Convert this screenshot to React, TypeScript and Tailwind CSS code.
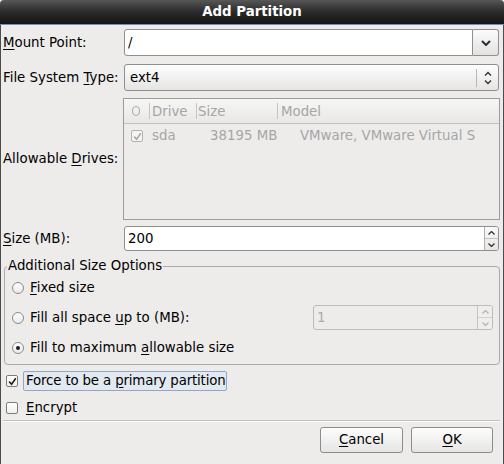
import React from "react";

function Mn({ children }: { children: React.ReactNode }) {
  return <u className="underline decoration-1 underline-offset-[2px]">{children}</u>;
}

function ChevronDown() {
  return (
    <svg width="10" height="6" viewBox="0 0 10 6">
      <path d="M1 1L5 5L9 1" fill="none" stroke="#2e2e2e" strokeWidth="2" />
    </svg>
  );
}

function UpDown() {
  return (
    <svg width="8" height="16" viewBox="0 0 8 16">
      <path d="M1 5.5L4 2.5L7 5.5M1 10.5L4 13.5L7 10.5" fill="none" stroke="#333" strokeWidth="1.4" />
    </svg>
  );
}

function Arrow({ up, color }: { up?: boolean; color: string }) {
  return (
    <svg width="7" height="4" viewBox="0 0 7 4">
      <path d={up ? "M0.5 3.5L3.5 0.5L6.5 3.5" : "M0.5 0.5L3.5 3.5L6.5 0.5"} fill="none" stroke={color} strokeWidth="1.3" />
    </svg>
  );
}

function SpinButtons({ disabled }: { disabled?: boolean }) {
  const c = disabled ? "#b4b4b4" : "#333";
  return (
    <div
      className={
        disabled
          ? "w-[15px] flex flex-col border-l border-[#c6c5c4] bg-[#efeeed]"
          : "w-[14px] flex flex-col border-l border-[#b0afae] bg-linear-to-b from-[#fafafa] to-[#e6e5e4]"
      }
    >
      <div className="flex-1 flex items-center justify-center">
        <Arrow up color={c} />
      </div>
      <div className={disabled ? "h-px bg-[#d2d1d0]" : "h-px bg-[#c2c1c0]"} />
      <div className="flex-1 flex items-center justify-center">
        <Arrow color={c} />
      </div>
    </div>
  );
}

function Check({ checked, disabled }: { checked?: boolean; disabled?: boolean }) {
  return (
    <span
      className={
        disabled
          ? "w-[12px] h-[12px] shrink-0 flex items-center justify-center border border-[#b3b2b1] rounded-[2px] bg-[#f4f4f3]"
          : "w-[12px] h-[12px] shrink-0 flex items-center justify-center border border-[#7d7d7d] rounded-[2px] bg-linear-to-b from-white to-[#f0efee]"
      }
    >
      {checked && (
        <svg width="9" height="9" viewBox="0 0 9 9">
          <path d="M1.2 4.6L3.6 7.2L7.8 1.3" fill="none" stroke={disabled ? "#a8a8a8" : "#1e1e1e"} strokeWidth="1.6" />
        </svg>
      )}
    </span>
  );
}

function Radio({ checked }: { checked?: boolean }) {
  return (
    <span className="w-[12px] h-[12px] shrink-0 rounded-full border border-[#8a8a8a] bg-linear-to-b from-white to-[#ebeae9] flex items-center justify-center">
      {checked && <span className="w-[4px] h-[4px] rounded-full bg-[#1e1e1e]" />}
    </span>
  );
}

export default function App() {
  return (
    <div className="w-[504px] h-[464px] overflow-hidden flex flex-col bg-[#edeceb] text-black font-['DejaVu_Sans',sans-serif] text-[13.33px] leading-[16px]">
      {/* Title bar */}
      <div className="h-[24px] shrink-0 rounded-t-[4px] flex items-center justify-center bg-linear-to-b from-[#575757] via-[#2a2a2a] to-[#161616] text-white font-bold">
        Add Partition
      </div>
      <div className="h-px shrink-0 bg-[#6f8fbd]" />

      <div className="flex-1 flex flex-col border-x border-[#4c4c4c] pl-[2px] pr-[4px]">
        {/* Mount point */}
        <div className="mt-[4px] h-[27px] flex items-center">
          <label className="w-[121px] shrink-0">
            <Mn>M</Mn>ount Point:
          </label>
          <div className="flex-1 h-full flex">
            <div className="flex-1 flex items-center pl-[3px] bg-white border border-[#8f8f8f] rounded-l-[3px]">/</div>
            <div className="w-[26px] flex items-center justify-center border border-l-0 border-[#8f8f8f] rounded-r-[3px] bg-linear-to-b from-[#fbfbfb] to-[#e3e2e1]">
              <ChevronDown />
            </div>
          </div>
        </div>

        {/* File system type */}
        <div className="mt-[8px] h-[27px] flex items-center">
          <label className="w-[121px] shrink-0">
            File System <Mn>T</Mn>ype:
          </label>
          <div className="flex-1 h-full flex items-center border border-[#8f8f8f] rounded-[3px] bg-linear-to-b from-[#fdfdfd] to-[#e6e5e4]">
            <span className="flex-1 pl-[5px]">ext4</span>
            <span className="w-px h-[18px] bg-[#b8b7b6]" />
            <span className="w-[21px] flex justify-center">
              <UpDown />
            </span>
          </div>
        </div>

        {/* Allowable drives */}
        <div className="mt-[7px] h-[122px] flex items-center">
          <label className="w-[120px] shrink-0">
            Allowable <Mn>D</Mn>rives:
          </label>
          <div className="flex-1 -mr-px h-full flex flex-col border border-[#9d9c9b] text-[#a6a6a6] overflow-hidden whitespace-nowrap">
            <div className="h-[25px] shrink-0 flex items-center border-b border-[#c3c2c1] bg-linear-to-b from-[#f6f6f5] to-[#e9e8e7]">
              <div className="w-[25px] pl-[8px] flex">
                <span className="w-[8px] h-[10px] rounded-full border border-[#ababab]" />
              </div>
              <span className="w-px h-[16px] bg-[#c6c5c4]" />
              <div className="w-[46px] pl-[2px] pt-[2px]">Drive</div>
              <span className="w-px h-[16px] bg-[#c6c5c4]" />
              <div className="w-[80px] pl-[1px] pt-[2px]">Size</div>
              <span className="w-px h-[16px] bg-[#c6c5c4]" />
              <div className="flex-1 pl-[3px] pt-[2px]">Model</div>
            </div>
            <div className="h-[24px] shrink-0 flex items-center">
              <div className="w-[26px] pl-[7px] flex">
                <Check checked disabled />
              </div>
              <div className="w-[47px] pl-[2px]">sda</div>
              <div className="w-[81px] pl-[13px]">38195 MB</div>
              <div className="flex-1 pl-[22px]">VMware, VMware Virtual S</div>
            </div>
          </div>
        </div>

        {/* Size */}
        <div className="mt-[6px] h-[25px] flex items-center">
          <label className="w-[121px] shrink-0">
            <Mn>S</Mn>ize (MB):
          </label>
          <div className="flex-1 h-full flex border border-[#8f8f8f] rounded-[3px] bg-white overflow-hidden">
            <span className="flex-1 flex items-center pl-[3px]">200</span>
            <SpinButtons />
          </div>
        </div>

        {/* Additional size options */}
        <fieldset className="mt-[7px] ml-[1px] -mr-px pb-[2px] border border-[#acabaa] rounded-[4px]">
          <legend className="ml-[2px] px-[1px]">Additional Size Options</legend>
          <div className="h-[28px] flex items-center pl-[7px]">
            <Radio />
            <span className="ml-[6px]">
              <Mn>F</Mn>ixed size
            </span>
          </div>
          <div className="h-[31px] flex items-center pl-[7px] pr-[6px]">
            <Radio />
            <span className="ml-[6px]">
              Fill all space <Mn>u</Mn>p to (MB):
            </span>
            <div className="ml-auto w-[180px] h-[25px] flex border border-[#bdbcbb] rounded-[3px] bg-[#edeceb] overflow-hidden">
              <span className="flex-1 flex items-center pl-[3px] text-[#acacac]">1</span>
              <SpinButtons disabled />
            </div>
          </div>
          <div className="h-[29px] flex items-center pl-[7px]">
            <Radio checked />
            <span className="ml-[6px]">
              Fill to maximum <Mn>a</Mn>llowable size
            </span>
          </div>
        </fieldset>

        {/* Checkboxes */}
        <div className="mt-[6px] h-[20px] flex items-center pl-[3px]">
          <Check checked />
          <span className="ml-[5px] h-full flex items-center pl-[2px] border border-[#93a7c3] rounded-[2px] bg-[#e3e9f1]">
            <span className="tracking-[-0.15px]">
              Force to be a <Mn>p</Mn>rimary partition
            </span>
          </span>
        </div>
        <div className="mt-[7px] h-[20px] flex items-center pl-[3px]">
          <Check />
          <span className="ml-[5px] h-full flex items-center pl-[2px] border border-transparent">
            <span>
              <Mn>E</Mn>ncrypt
            </span>
          </span>
        </div>

        {/* Separator */}
        <div className="mt-[2px] -mr-px h-px bg-[#bfbebd]" />
        <div className="-mr-px h-px bg-white" />

        {/* Buttons */}
        <div className="mt-[5px] flex justify-end gap-[8px] pr-[6px]">
          <button className="w-[83px] h-[26px] flex items-center justify-center border border-[#8c8c8c] rounded-[3px] bg-linear-to-b from-[#fdfdfd] to-[#e6e5e4]">
            <span>
              <Mn>C</Mn>ancel
            </span>
          </button>
          <button className="w-[82px] h-[26px] flex items-center justify-center border border-[#8c8c8c] rounded-[3px] bg-linear-to-b from-[#fdfdfd] to-[#e6e5e4]">
            <span>
              <Mn>O</Mn>K
            </span>
          </button>
        </div>
      </div>
    </div>
  );
}
